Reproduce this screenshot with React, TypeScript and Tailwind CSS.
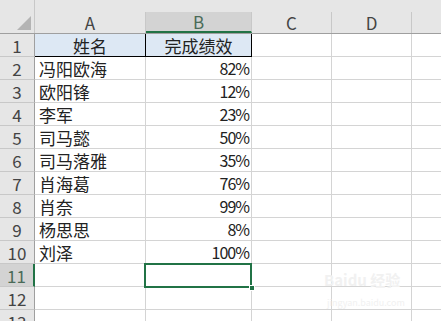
import React from "react";

const rows: [string, string][] = [
  ["姓名", "完成绩效"],
  ["冯阳欧海", "82%"],
  ["欧阳锋", "12%"],
  ["李军", "23%"],
  ["司马懿", "50%"],
  ["司马落雅", "35%"],
  ["肖海葛", "76%"],
  ["肖奈", "99%"],
  ["杨思思", "8%"],
  ["刘泽", "100%"],
  ["", ""],
  ["", ""],
  ["", ""],
];

export default function App() {
  return (
    <div
      className="relative w-[441px] h-[321px] overflow-hidden bg-white text-[#222]"
      style={{ fontFamily: "'Noto Sans CJK SC', 'Noto Sans', sans-serif" }}
    >
      {/* header strip */}
      <div className="flex h-[34px] bg-[#e6e6e6] border-b border-[#9f9f9f]">
        <div className="w-[35px] shrink-0 border-r border-[#c8c8c8] flex items-end justify-end pr-[3px] pb-[3px]">
          <div className="w-0 h-0 border-l-[14px] border-l-transparent border-b-[14px] border-b-[#b4b4b4]" />
        </div>
        <div className="w-[111px] shrink-0 mt-[12px] border-r border-[#c8c8c8] flex items-center justify-center text-[17px] text-[#444] leading-none">
          A
        </div>
        <div className="w-[106px] shrink-0 mt-[12px] bg-[#d3d3d3] border-r border-[#c8c8c8] border-b-2 border-b-[#217346] flex items-center justify-center text-[17px] text-[#4a6b58] leading-none">
          B
        </div>
        <div className="w-[80px] shrink-0 mt-[12px] border-r border-[#c8c8c8] flex items-center justify-center text-[17px] text-[#444] leading-none">
          C
        </div>
        <div className="w-[80px] shrink-0 mt-[12px] border-r border-[#c8c8c8] flex items-center justify-center text-[17px] text-[#444] leading-none">
          D
        </div>
        <div className="flex-1 mt-[12px]" />
      </div>

      {rows.map(([a, b], i) => {
        const n = i + 1;
        const header = n === 1;
        const sel = n === 11;
        return (
          <div key={n} className="flex h-[23px]">
            <div
              className={
                sel
                  ? "w-[35px] shrink-0 bg-[#d3d3d3] border-b border-[#c8c8c8] border-r-2 border-r-[#217346] flex items-center justify-center text-[17px] text-[#4a6b58] leading-none"
                  : "w-[35px] shrink-0 bg-[#e6e6e6] border-b border-[#c8c8c8] border-r border-r-[#9f9f9f] flex items-center justify-center text-[17px] text-[#444] leading-none"
              }
            >
              {n}
            </div>
            <div
              className={
                header
                  ? "w-[111px] shrink-0 bg-[#dde8f4] border-b border-black border-r border-r-black flex items-center justify-center text-[17px] leading-none"
                  : "w-[111px] shrink-0 border-b border-[#d4d4d4] border-r border-r-[#d4d4d4] flex items-center pl-[4px] text-[17px] leading-none"
              }
            >
              {a}
            </div>
            <div
              className={
                header
                  ? "w-[106px] shrink-0 bg-[#dde8f4] border-b border-black border-r border-r-black flex items-center justify-center text-[17px] leading-none"
                  : "w-[106px] shrink-0 border-b border-[#d4d4d4] border-r border-r-[#d4d4d4] flex items-center justify-end pr-[2px] text-[16px] tracking-[-1px] leading-none"
              }
            >
              {b}
            </div>
            <div className="w-[80px] shrink-0 border-b border-r border-[#d4d4d4]" />
            <div className="w-[80px] shrink-0 border-b border-r border-[#d4d4d4]" />
            <div className="flex-1 border-b border-[#d4d4d4]" />
          </div>
        );
      })}

      {/* selected cell B11 */}
      <div className="absolute left-[144px] top-[263px] w-[108px] h-[25px] border-2 border-[#217346]" />
      <div className="absolute left-[249px] top-[285px] w-[6px] h-[6px] bg-[#217346] border border-white" />

      {/* watermark */}
      <div className="absolute left-[324px] top-[272px] text-[15px] font-bold text-[#f1f1f1] leading-none select-none">
        Baidu 经验
      </div>
      <div className="absolute left-[327px] top-[298px] text-[9px] text-[#f1f1f1] leading-none select-none">
        jingyan.baidu.com
      </div>
    </div>
  );
}
